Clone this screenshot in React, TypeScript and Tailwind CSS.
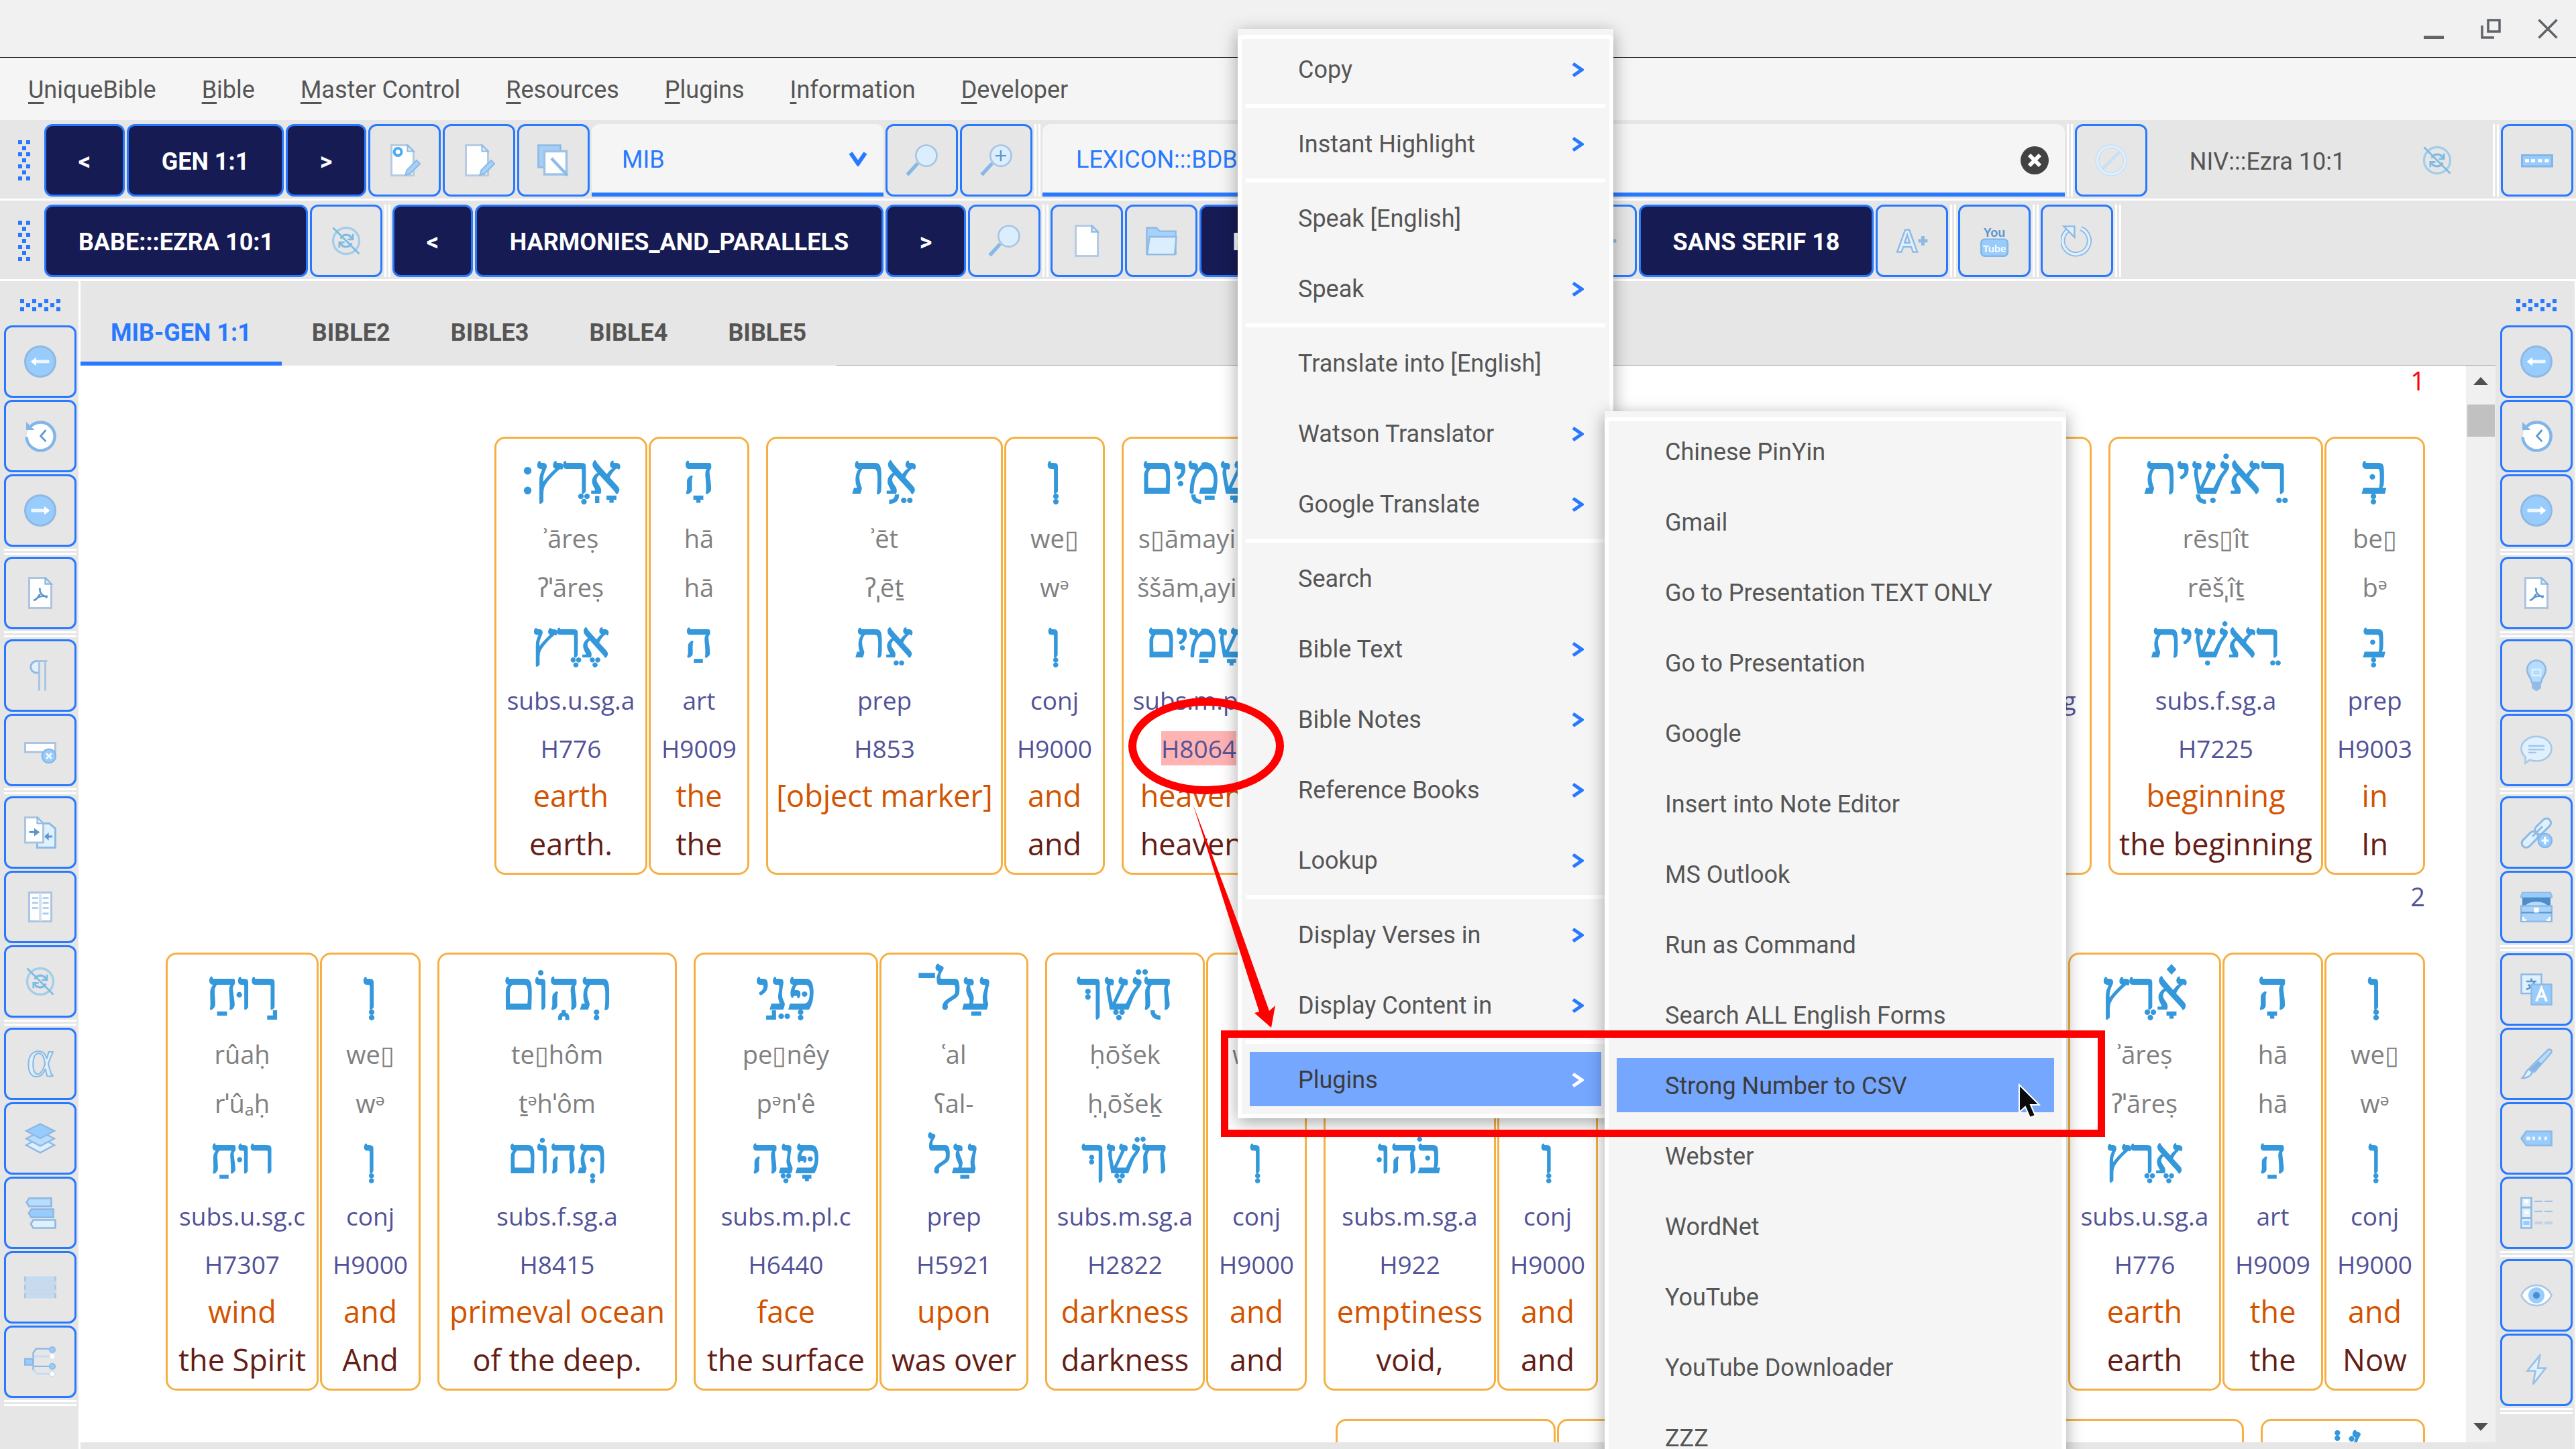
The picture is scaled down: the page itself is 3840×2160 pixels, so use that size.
import React from "react";

type P = { children?: React.ReactNode };

/* ---------- icons (16-unit grid) ---------- */
const Svg = ({ children }: P) => (
  <svg viewBox="0 0 16 16" className="size-12 shrink-0" fill="none" aria-hidden="true">
    {children}
  </svg>
);
const S = "#8fb9e3";
const D = "#5c96cf";
const F = "#98ccfd";
const L = "#dff0fe";

const Back = () => (
  <Svg>
    <circle cx="8" cy="8" r="7.5" fill={F} stroke={S} />
    <path d="M12.5 8H5" stroke="#eef7ff" strokeWidth="1.6" />
    <path d="M3.2 8 6 5.8v4.4z" fill="#fff" />
  </Svg>
);
const Forward = () => (
  <Svg>
    <circle cx="8" cy="8" r="7.5" fill={F} stroke={S} />
    <path d="M3.5 8H11" stroke="#eef7ff" strokeWidth="1.6" />
    <path d="M12.8 8 10 5.8v4.4z" fill="#fff" />
  </Svg>
);
const HistoryIcon = () => (
  <Svg>
    <circle cx="8.2" cy="8" r="6.9" fill="#fff" />
    <path d="M1.2 8.5a7 7 0 1 0 1.6-4.8" stroke="#83b6e8" strokeWidth="1.5" />
    <path d="M1 1v4h4.2z" fill="#83b6e8" />
    <path d="M10.8 5 8.2 8l2.6 2.7" stroke={D} strokeWidth="0.9" />
  </Svg>
);
const page = "M2.5.5h8l3 3v12h-11z";
const Fold = () => <path d="M10.5.5v3h3z" fill={L} stroke={S} strokeWidth="0.8" />;
const Pdf = () => (
  <Svg>
    <path d={page} fill="#fff" stroke="#a9c5e2" />
    <Fold />
    <path d="M7.8 5.5c-.2 2 .4 3.600 3.700 4.700M7.900 8.500c-.8 1.500-1.900 2.800-3.200 3.200M6.500 10.300c1.500-.7 3.500-1 5.200-.6" stroke={D} strokeWidth="0.9" />
  </Svg>
);
const Pilcrow = () => (
  <Svg>
    <path d="M7.500.8H6.200a2.900 2.900 0 0 0 0 5.900h1.300z" fill={L} stroke={S} />
    <path d="M6.500.8h5M7.500.5V15.500M10.500.5V15.500" stroke="#a9c5e2" strokeWidth="1" />
  </Svg>
);
const FieldRemove = () => (
  <Svg>
    <path d="M.5 4.500h15v4.500H.5z" fill="#fff" stroke="#a9c5e2" />
    <circle cx="12.300" cy="11" r="3.400" fill={F} stroke="#83b6e8" strokeWidth="0.7" />
    <path d="m11 9.700 2.600 2.600m0-2.600L11 12.300" stroke="#fff" strokeWidth="0.9" />
  </Svg>
);
const Docs = () => (
  <Svg>
    <path d="M6.500 3.500h6l3 2.500v9.500h-9z" fill={L} stroke={S} />
    <path d="M.5.5h6l3 3v9.500h-9z" fill="#fff" stroke="#a9c5e2" />
    <path d="M6.500.5v3h3z" fill={L} stroke={S} strokeWidth="0.7" />
    <path d="M2.500 7.800h3" stroke={D} />
    <path d="M5 5.800v4L7.800 7.800z" fill={D} />
    <path d="M11 10h3" stroke={D} />
    <path d="M12.200 8v4L10 10z" fill={D} />
  </Svg>
);
const Book = () => (
  <Svg>
    <path d="M2.500.8h11v14.400h-11z" fill="#fff" stroke="#a9c5e2" />
    <path d="M8 1v14" stroke="#d5e3f1" strokeWidth="1.4" />
    <path d="M4 3.500h3M4 6h3M4 8.500h3M9.200 3.500h3M9.200 6h3M9.200 8.500h3M9.200 11.300h3" stroke="#a9c8ea" strokeWidth="0.9" />
  </Svg>
);
const NoSync = () => (
  <Svg>
    <circle cx="8" cy="8" r="6.500" stroke="#a3cde8" strokeWidth="1.100" />
    <path d="M10.800 6.800A3 3 0 0 0 5.300 6.900M5.200 9.200a3 3 0 0 0 5.500-.1" stroke="#7dbbe3" strokeWidth="1.100" />
    <path d="M11.400 4.600v2.700H8.800M4.600 11.400V8.800h2.600" stroke="#7dbbe3" strokeWidth="0.9" />
    <path d="m1.500 1.500 13 13" stroke="#7dbbe3" strokeWidth="0.9" />
  </Svg>
);
const Alpha = () => (
  <Svg>
    <text x="8" y="14" textAnchor="middle" fontSize="26" fontFamily="Liberation Serif, serif" fill={L} stroke={S} strokeWidth="0.7">
      α
    </text>
  </Svg>
);
const Layers = () => (
  <Svg>
    <path d="m8 7.500 7 3.800-7 3.800-7-3.800z" fill={L} stroke={S} strokeWidth="0.8" />
    <path d="m8 4.500 7 3.600-7 3.700-7-3.700z" fill="#b6dcfe" stroke={S} strokeWidth="0.8" />
    <path d="m8 .8 7 3.500-7 3.700-7-3.700z" fill={F} stroke={S} strokeWidth="0.8" />
  </Svg>
);
const BooksStack = () => (
  <Svg>
    <path d="M13.500.7H2.500L1.200 2.800l1.300 2h11z" fill="#b6dcfe" stroke={S} strokeWidth="0.9" />
    <path d="M14.500 6.200h-11L2.300 8.200l1.200 2h11z" fill={F} stroke={S} strokeWidth="0.9" />
    <path d="M15.500 11.500h-11l-1.200 2 1.200 2h11z" fill={L} stroke={S} strokeWidth="0.9" />
  </Svg>
);
const Bars = () => (
  <Svg>
    <path d="M0 2.500h16v11H0z" fill="#cdd9e6" />
    <path d="M0 3.800h16M0 8h16M0 12.200h16" stroke="#a9c8e8" strokeWidth="2.200" />
    <path d="M1 3.800h14M1 8h14M1 12.200h14" stroke="#c3dcf4" strokeWidth="2.200" />
  </Svg>
);
const Tree = () => (
  <Svg>
    <path d="M4.500 8V3.500L6 1.500h7M5 10.300h8M4.500 8v4" stroke={S} strokeWidth="0.8" />
    <path d="M5 5.300h8M4.500 12l2 2h7" stroke="#c3dcf4" strokeWidth="0.9" />
    <path d="M.4 6.500h4v3h-4z" fill={F} stroke={S} strokeWidth="0.8" />
    <circle cx="14" cy="2" r="1.400" fill={F} stroke={S} strokeWidth="0.6" />
    <circle cx="14" cy="5.300" r="1.100" fill="#fff" />
    <circle cx="14" cy="10.300" r="1.400" fill={F} stroke={S} strokeWidth="0.6" />
    <circle cx="14" cy="14" r="1.300" fill="#fff" stroke="#c3dcf4" strokeWidth="0.4" />
  </Svg>
);
const Bulb = () => (
  <Svg>
    <path d="M8 .5a4.600 4.600 0 0 0-4.600 4.700C3.400 8 5.500 8.800 5.700 11.500h4.600c.2-2.700 2.300-3.500 2.300-6.300A4.600 4.600 0 0 0 8 .5z" fill="#b6dcfe" stroke={S} strokeWidth="0.9" />
    <path d="M6 5h4v3H6z" stroke={L} strokeWidth="0.8" />
    <path d="M5.700 11.500h4.600v2.800L8 15.800l-2.300-1.500z" fill="#92bbe5" />
  </Svg>
);
const Chat = () => (
  <Svg>
    <path d="M8 1.300c4.200 0 7.500 2.700 7.500 6s-3.300 6.200-7.500 6.200c-1.200 0-2.300-.2-3.300-.6L2.500 14.500v-3C1.200 10.400.5 9 .5 7.300c0-3.300 3.300-6 7.500-6z" fill={L} stroke="#a9c8e8" strokeWidth="0.9" />
    <path d="M4 6h8M4 7.800h8M4 9.300h4" stroke="#9fc5ec" strokeWidth="0.8" />
  </Svg>
);
const LinkAdd = () => (
  <Svg>
    <rect x="6.500" y="3" width="9.500" height="4.400" rx="2.200" transform="rotate(-45 11 5.200)" fill={L} stroke={S} strokeWidth="1" />
    <rect x="0" y="9.300" width="9.500" height="4.400" rx="2.200" transform="rotate(-45 4.700 11.500)" fill={L} stroke={S} strokeWidth="1" />
    <path d="m6 10 5-5" stroke={S} />
    <circle cx="12.300" cy="12" r="3.400" fill={F} stroke="#83b6e8" strokeWidth="0.7" />
    <path d="M10.500 12h3.600M12.300 10.200v3.600" stroke="#fff" />
  </Svg>
);
const Chest = () => (
  <Svg>
    <path d="M1 .8h14l1 2.500H0z" fill={F} stroke={S} strokeWidth="0.6" />
    <path d="M1 3.300h14V8H1z" fill="#4e8dcb" />
    <path d="M2 8c1.500-3.500 10.500-3.500 12 0z" fill="#b6dcfe" />
    <path d="M.4 7.500h15.200v7.700H.4z" fill="#a9d3fb" stroke={S} strokeWidth="0.8" />
    <path d="M.4 10.800h15.200" stroke={D} strokeWidth="0.7" />
    <path d="M6.800 8.300h2.400v2.500H6.800z" fill="#fff" />
    <path d="M1.500 13v1.500H3M14.500 13v1.500H13" stroke="#fff" strokeWidth="0.9" />
  </Svg>
);
const Translate = () => (
  <Svg>
    <path d="M.5.5h10V10H.5z" fill={L} stroke={S} strokeWidth="0.8" />
    <path d="M3 4h5M5.500 2.500V4M7 4c-.5 2-2 3.300-4 4M4 5.500c.8 1.200 2 2 3.700 2.300" stroke={D} strokeWidth="0.9" />
    <path d="M5.500 5.500h10v10h-10z" fill={F} stroke={S} strokeWidth="0.8" />
    <path d="m8 13.800 2.500-6.500 2.500 6.500M8.800 11.500h3.400" stroke="#fff" strokeWidth="1.200" />
  </Svg>
);
const Brush = () => (
  <Svg>
    <path d="M14 .8c1.200-.4 1.900.6 1.300 1.700L7 12l-2.300-2z" fill="#b6dcfe" stroke={S} strokeWidth="0.8" />
    <path d="m9 6.500-4.300 4L6.500 12l4-4.200z" fill="#83b6e8" />
    <path d="M4.300 10.500 6 12.300c-1 1.700-2.800 2.800-5 2.700 1.500-1.400 1.500-3.400 3.300-4.500z" fill={L} stroke={S} strokeWidth="0.8" />
  </Svg>
);
const Tag = () => (
  <Svg>
    <path d="M3 4.500h12.500v7H3L.5 8z" fill={F} stroke={S} strokeWidth="0.9" />
    <path d="M3 8h2M6 8h1.300M9 8h1.300M12 8h1.300" stroke="#e9f5ff" strokeWidth="1.600" />
  </Svg>
);
const Keyboard = () => (
  <Svg>
    <path d="M.5 5.500h15v5.500H.5z" fill={F} stroke="#83b6e8" strokeWidth="1" />
    <path d="M2 8.200h2M5 8.200h2M8.500 8.200h2M11.800 8.200h2" stroke="#fff" strokeWidth="1.600" />
  </Svg>
);
const ThumbList = () => (
  <Svg>
    <path d="M.5.5h5v15h-5z" fill={L} stroke={S} strokeWidth="0.9" />
    <path d="M.5 5.300h5M.5 10.500h5" stroke={S} />
    <path d="M1.500 13h3" stroke={F} strokeWidth="2" />
    <path d="M2.200 2.300h1.800M2.200 7.800h2" stroke="#fff" strokeWidth="1.800" />
    <path d="M7 2.300h4M12 2.300h4M7 7.300h4M12 7.300h4" stroke="#a0c2e4" strokeWidth="0.8" />
    <path d="M7 13h4M12 13h4" stroke="#c3d3e3" strokeWidth="1.500" />
  </Svg>
);
const Eye = () => (
  <Svg>
    <path d="M.5 8C3.500 1.300 12.500 1.300 15.500 8 12.500 14.700 3.500 14.700.5 8z" fill="#fff" stroke="#a9c8e8" strokeWidth="0.9" />
    <circle cx="8" cy="8" r="4" fill={F} />
    <circle cx="8" cy="8" r="1.700" fill="#4e8dcb" />
  </Svg>
);
const Bolt = () => (
  <Svg>
    <path d="M9.700.8 3.500 8.500h4l-1.200 6.700 6.200-8H8.700z" fill={L} stroke="#9dc0e4" strokeWidth="0.9" />
  </Svg>
);
const Search = () => (
  <Svg>
    <path d="M.8 15.200 6 9.500" stroke="#86b8e8" strokeWidth="1.800" />
    <circle cx="10.300" cy="5.700" r="5.200" fill="#dbeefe" stroke="#a9c5e2" strokeWidth="0.9" />
  </Svg>
);
const ZoomIn = () => (
  <Svg>
    <path d="M.8 15.200 6 9.500" stroke="#86b8e8" strokeWidth="1.800" />
    <circle cx="10.300" cy="5.700" r="5.200" fill="#dbeefe" stroke="#a9c5e2" strokeWidth="0.9" />
    <path d="M7.600 5.700H13M10.300 3v5.400" stroke={D} strokeWidth="0.8" />
  </Svg>
);
const File = () => (
  <Svg>
    <path d={page} fill="#fff" stroke="#b4cbe3" />
    <Fold />
  </Svg>
);
const Folder = () => (
  <Svg>
    <path d="M.8 14.500V1.500h4.800l1.700 1.700h7.900v11.300z" fill="#a5d2fc" stroke={S} strokeWidth="0.8" />
    <path d="M1 14.800 2.200 6h13.300l-.8 8.800z" fill="#dbeefe" stroke={S} strokeWidth="0.8" />
  </Svg>
);
const Pencil = () => (
  <path d="m8.500 15.300.6-2.400 4.900-4.900 1.700 1.700-4.900 4.900z" fill="#a5d2fc" stroke={S} strokeWidth="0.7" />
);
const DocEdit = () => (
  <Svg>
    <path d="M1.500.5h8l3 3v12h-11z" fill="#fff" stroke="#b4cbe3" />
    <path d="M9.500.5v3h3z" fill={L} stroke={S} strokeWidth="0.7" />
    <Pencil />
  </Svg>
);
const DocGear = () => (
  <Svg>
    <path d="M1.500.5h8l3 3v12h-11z" fill="#fff" stroke="#b4cbe3" />
    <path d="M9.500.5v3h3z" fill={L} stroke={S} strokeWidth="0.7" />
    <circle cx="4.700" cy="3.800" r="1.800" stroke="#4cacf0" strokeWidth="1.400" />
    <Pencil />
  </Svg>
);
const CopyEdit = () => (
  <Svg>
    <path d="M.5.5h11v11H.5z" fill="#a5cff7" stroke={S} strokeWidth="0.9" />
    <path d="M3.500 3.500h11v11.500h-11z" fill="#fff" stroke="#9fc3e8" strokeWidth="1.200" />
    <path d="m7 7 8 8.500" stroke="#8ebbe8" strokeWidth="1.500" />
  </Svg>
);
const Forbidden = () => (
  <Svg>
    <circle cx="8" cy="8" r="6.900" stroke="#c9dff4" strokeWidth="2" />
    <circle cx="8" cy="8" r="6.900" stroke={L} strokeWidth="1" />
    <path d="m3.500 12.500 9-9" stroke="#c9dff4" strokeWidth="1.500" />
  </Svg>
);
const glyphA = "m.7 13.500 4-11h2l4 11H8.500L7.700 11H3.700l-.8 2.500zM4.400 9h2.600L5.700 5z";
const FontUp = () => (
  <Svg>
    <path d={glyphA} fill={L} stroke={S} strokeWidth="0.8" />
    <path d="M11.200 8h4.600M13.500 5.700v4.600" stroke={S} strokeWidth="1.700" />
  </Svg>
);
const FontDown = () => (
  <Svg>
    <path d={glyphA} fill={L} stroke={S} strokeWidth="0.8" />
    <path d="M11.200 8h4.600" stroke={S} strokeWidth="1.700" />
  </Svg>
);
const YouTube = () => (
  <Svg>
    <text x="8" y="6" textAnchor="middle" fontSize="6" fontWeight="700" fontFamily="Liberation Sans Narrow, Liberation Sans, sans-serif" fill={D}>
      You
    </text>
    <rect x="1.400" y="7.200" width="13.200" height="8.400" rx="1.800" fill={F} stroke="#83b6e8" strokeWidth="0.8" />
    <text x="8" y="13.500" textAnchor="middle" fontSize="5" fontWeight="700" fontFamily="Liberation Sans Narrow, Liberation Sans, sans-serif" fill="#f4faff">
      Tube
    </text>
  </Svg>
);
const Refresh = () => (
  <Svg>
    <path d="M10 1.900a6.600 6.600 0 1 1-6.500.9" stroke={S} strokeWidth="2.400" />
    <path d="M10 1.900a6.600 6.600 0 1 1-6.500.9" stroke={L} strokeWidth="1.200" />
    <path d="M1.500.8h5.300v5.400z" fill={L} stroke={S} strokeWidth="0.8" />
  </Svg>
);

/* ---------- toolbar parts ---------- */
const IconButton = ({ icon, label }: { icon: React.ReactNode; label: string }) => (
  <button
    aria-label={label}
    className="flex size-[108px] shrink-0 items-center justify-center rounded-xl border-3 border-[#2979ff] bg-[#e6e6e6]"
  >
    {icon}
  </button>
);
const DarkButton = ({ w, children }: P & { w: string }) => (
  <button
    className={`flex h-[108px] shrink-0 items-center justify-center overflow-hidden rounded-xl border-3 border-[#2979ff] bg-[#161b54] pt-[3px] text-[36px] font-bold whitespace-nowrap text-white ${w}`}
  >
    {children}
  </button>
);
const VSep = () => <div className="h-[108px] w-[9px] shrink-0 border-x-3 border-white" />;
const HSep = () => <div className="h-[9px] w-full shrink-0 border-y-3 border-white" />;

const dots = [0, 1, 2, 3, 4, 5, 6];
const VGrip = () => (
  <svg viewBox="0 0 18 60" className="mr-[21px] ml-[27px] h-[60px] w-[18px] shrink-0" fill="#2979ff" aria-hidden="true">
    {dots.map((i) =>
      i % 2 ? (
        <rect key={i} x="6" y={i * 9} width="6" height="6" />
      ) : (
        <g key={i}>
          <rect x="0" y={i * 9} width="6" height="6" />
          <rect x="12" y={i * 9} width="6" height="6" />
        </g>
      )
    )}
  </svg>
);
const HGrip = () => (
  <svg viewBox="0 0 60 18" className="mt-[27px] mb-[18px] h-[18px] w-[60px] shrink-0" fill="#2979ff" aria-hidden="true">
    {dots.map((i) =>
      i % 2 ? (
        <rect key={i} x={i * 9} y="6" width="6" height="6" />
      ) : (
        <g key={i}>
          <rect x={i * 9} y="0" width="6" height="6" />
          <rect x={i * 9} y="12" width="6" height="6" />
        </g>
      )
    )}
  </svg>
);

/* ---------- interlinear data ---------- */
type Word = { w: string; t: string[]; mark?: boolean };
const W = (w: string, ...t: string[]): Word => ({ w, t });
const and = (last: string) => W("w-[150px]", "וְ", "we▯", "wᵊ", "וְ", "conj", "H9000", "and", last);
const the = W("w-[150px]", "הָ", "hā", "hā", "הַ", "art", "H9009", "the", "the");
const et = W("w-[353px]", "אֵ֥ת", "ʾēt", "ʔˌēṯ", "אֵת", "prep", "H853", "[object marker]", "");
const earth = (heb: string, last: string) =>
  W("w-[228px]", heb, "ʾāreṣ", "ʔˈāreṣ", "אֶרֶץ", "subs.u.sg.a", "H776", "earth", last);

const row1: Word[][] = [
  [
    W("w-[150px]", "בְּ", "be▯", "bᵊ", "בְּ", "prep", "H9003", "in", "In"),
    W("w-[320px]", "רֵאשִׁ֖ית", "rēs▯ît", "rēšˌîṯ", "רֵאשִׁית", "subs.f.sg.a", "H7225", "beginning", "the beginning"),
  ],
  [W("w-[400px]", "בָּרָ֣א", "bārāʾ", "bārˈā", "ברא", "verb.qal.perf.p3.u.sg", "H1254", "create", "created")],
  [W("w-[236px]", "אֱלֹהִ֑ים", "ʾĕlōhîm", "ʔᵉlōhˈîm", "אֱלֹהִים", "subs.m.pl.a", "H430", "god(s)", "God")],
  [et],
  [
    the,
    {
      w: "w-[230px]",
      t: ["שָּׁמַ֖יִם", "s▯āmayim", "ššāmˌayim", "שָׁמַיִם", "subs.m.pl.a", "H8064", "heavens", "heavens"],
      mark: true,
    },
  ],
  [and("and"), et],
  [the, earth("אָֽרֶץ:", "earth.")],
];
const row2: Word[][] = [
  [and("Now"), the, earth("אָ֗רֶץ", "earth")],
  [W("w-[313px]", "הָיְתָ֥ה", "hāytâ", "hāyᵊṯˌā", "היה", "verb.qal.perf", "H1961", "be", "was")],
  [W("w-[313px]", "תֹ֨הוּ֙", "tōhû", "ṯˈōhû", "תֹּהוּ", "subs.m.sg.a", "H8414", "emptiness", "formless")],
  [
    and("and"),
    W("w-[257px]", "בֹ֔הוּ", "bōhû", "vˈōhû", "בֹּהוּ", "subs.m.sg.a", "H922", "emptiness", "void,"),
  ],
  [
    and("and"),
    W("w-[238px]", "חֹ֖שֶׁךְ", "ḥōšek", "ḥˌōšeḵ", "חֹשֶׁךְ", "subs.m.sg.a", "H2822", "darkness", "darkness"),
  ],
  [
    W("w-[222px]", "עַל־", "ʿal", "ʕal-", "עַל", "prep", "H5921", "upon", "was over"),
    W("w-[275px]", "פְּנֵ֣י", "pe▯nêy", "pᵊnˈê", "פָּנֶה", "subs.m.pl.c", "H6440", "face", "the surface"),
  ],
  [W("w-[357px]", "תְה֑וֹם", "te▯hôm", "ṯᵊhˈôm", "תְּהוֹם", "subs.f.sg.a", "H8415", "primeval ocean", "of the deep.")],
  [
    and("And"),
    W("w-[228px]", "ר֣וּחַ", "rûaḥ", "rˈûₐḥ", "רוּחַ", "subs.u.sg.c", "H7307", "wind", "the Spirit"),
  ],
];
const row3: Word[][] = [
  [W("w-[245px]", "אֱלֹהִ֔ים", "ʾĕlōhîm", "ʔᵉlōhˈîm", "אֱלֹהִים", "subs.m.pl.a", "H430", "god(s)", "of God")],
  [W("w-[325px]", "מְרַחֶ֖פֶת", "me▯raḥepet", "mᵊraḥˌefeṯ", "רחף", "verb.piel.ptca", "H7363", "shake", "was hovering")],
  [
    W("w-[222px]", "עַל־", "ʿal", "ʕal-", "עַל", "prep", "H5921", "upon", "over"),
    W("w-[275px]", "פְּנֵ֥י", "pe▯nêy", "pᵊnˌê", "פָּנֶה", "subs.m.pl.c", "H6440", "face", "the surface"),
  ],
  [
    the,
    W("w-[328px]", "מָּֽיִם:", "māyim", "mmˈāyim", "מַיִם", "subs.m.pl.a", "H4325", "water", "of the waters."),
  ],
];

const lineClass = [
  "h-[109px] font-['Liberation_Serif',serif] text-[80px] leading-[102px] text-[#3498db] [-webkit-text-stroke:2px_#3498db]",
  "h-[73px] text-[38px] leading-[73px] text-[#808080]",
  "h-[73px] text-[38px] leading-[73px] text-[#808080]",
  "h-[95px] font-['Liberation_Serif',serif] text-[72px] leading-[86px] text-[#3498db] [-webkit-text-stroke:2px_#3498db]",
  "h-[73px] text-[37px] leading-[73px] text-[#525298]",
  "h-[72px] text-[37px] leading-[72px] text-[#525298]",
  "h-[72px] text-[45px] leading-[67px] text-[#d35400]",
  "h-[72px] text-[45px] leading-[68px] text-[#641e16]",
];

const WordBox = ({ word }: { word: Word }) => (
  <div className={`flex h-[653px] shrink-0 flex-col items-center rounded-2xl border-3 border-[#f5b041] pt-[3px] whitespace-nowrap ${word.w}`}>
    {word.t.map((t, i) => (
      <div key={i} dir={i === 0 || i === 3 ? "rtl" : "ltr"} className={lineClass[i]}>
        {word.mark && i === 5 ? <mark className="bg-[#ffb3b3] text-[#525298]">{t}</mark> : t}
      </div>
    ))}
  </div>
);
const Row = ({ groups }: { groups: Word[][] }) => (
  <div dir="rtl" className="flex gap-[25px]">
    {groups.map((g, i) => (
      <div key={i} className="flex gap-0.5">
        {g.map((w, j) => (
          <WordBox key={j} word={w} />
        ))}
      </div>
    ))}
  </div>
);

/* ---------- menus ---------- */
const Chevron = ({ className }: { className: string }) => (
  <svg viewBox="0 0 18 22" className={`h-[22px] w-[18px] ${className}`} fill="none" aria-hidden="true">
    <path d="m2 2 13 9-13 9" stroke="currentColor" strokeWidth="5" />
  </svg>
);
const MenuPanel = ({ children, place }: P & { place: string }) => (
  <div className={`absolute bg-[#f5f5f5] pt-[9px] text-[36px] shadow-[0_6px_24px_rgba(0,0,0,0.35)] ${place}`}>
    <div className="rounded-t-md border-6 border-white">
      <div className="-mt-2">{children}</div>
    </div>
  </div>
);
const Item = ({ label, sub, active, pad }: { label: string; sub?: boolean; active?: boolean; pad: string }) => (
  <button
    role="menuitem"
    className={`mx-3 my-3 flex h-[81px] w-[calc(100%-24px)] items-center justify-between pt-0.5 pr-[26px] text-left whitespace-nowrap ${pad} ${
      active ? "bg-[#75a7ff] text-[#3c3c3c]" : "text-[#555555]"
    }`}
  >
    {label}
    {sub && <Chevron className={active ? "text-white" : "text-[#2979ff]"} />}
  </button>
);
const menu: [string, boolean][][] = [
  [["Copy", true]],
  [["Instant Highlight", true]],
  [["Speak [English]", false], ["Speak", true]],
  [["Translate into [English]", false], ["Watson Translator", true], ["Google Translate", true]],
  [["Search", false], ["Bible Text", true], ["Bible Notes", true], ["Reference Books", true], ["Lookup", true]],
  [["Display Verses in", true], ["Display Content in", true]],
  [["Plugins", true]],
];
const plugins = [
  "Chinese PinYin", "Gmail", "Go to Presentation TEXT ONLY", "Go to Presentation", "Google",
  "Insert into Note Editor", "MS Outlook", "Run as Command", "Search ALL English Forms",
  "Strong Number to CSV", "Webster", "WordNet", "YouTube", "YouTube Downloader", "ZZZ",
];

const menubar = ["UniqueBible", "Bible", "Master Control", "Resources", "Plugins", "Information", "Developer"];
const tabs = ["MIB-GEN 1:1", "BIBLE2", "BIBLE3", "BIBLE4", "BIBLE5"];

export default function App() {
  return (
    <div className="relative flex h-screen flex-col overflow-hidden bg-[#e6e6e6] font-[Roboto,sans-serif] text-[#555555]">
      <header className="flex h-[86px] shrink-0 items-center justify-end border-b border-black bg-[#f1f1f1] pr-[27px]">
        <div className="flex gap-[55px] text-[#5f6368]">
          <button aria-label="Minimize">
            <svg viewBox="0 0 30 30" className="size-[30px]" aria-hidden="true"><path d="M0 25.500h30v4.500H0z" fill="currentColor" /></svg>
          </button>
          <button aria-label="Restore">
            <svg viewBox="0 0 30 30" className="size-[30px]" fill="none" stroke="currentColor" strokeWidth="3.500" aria-hidden="true">
              <path d="M11 2h17v17H11z" />
              <path d="M2 10v18h18" />
            </svg>
          </button>
          <button aria-label="Close">
            <svg viewBox="0 0 30 30" className="size-[30px]" fill="none" stroke="currentColor" strokeWidth="3.500" aria-hidden="true">
              <path d="m1.500 1.500 27 27m0-27-27 27" />
            </svg>
          </button>
        </div>
      </header>

      <nav className="flex h-[93px] shrink-0 items-center bg-[#f5f5f5] pt-0.5 pl-2 text-[36px]">
        {menubar.map((m) => (
          <button key={m} className="px-[34px]">
            <span className="underline decoration-3 underline-offset-6">{m[0]}</span>
            {m.slice(1)}
          </button>
        ))}
      </nav>

      <div className="flex h-[120px] shrink-0 items-center border-b-3 border-white pt-[3px] pr-1">
        <VGrip />
        <div className="flex min-w-0 flex-1 items-center gap-[3px]">
          <DarkButton w="w-[120px]">&lt;</DarkButton>
          <DarkButton w="w-[234px]">GEN 1:1</DarkButton>
          <DarkButton w="w-[120px]">&gt;</DarkButton>
          <IconButton icon={<DocGear />} label="Edit settings" />
          <IconButton icon={<DocEdit />} label="Edit note" />
          <IconButton icon={<CopyEdit />} label="Edit copy" />
          <div className="relative h-[108px] w-[435px] shrink-0">
            <select
              aria-label="Version"
              className="h-full w-full appearance-none rounded-t-xl border-b-6 border-[#2979ff] bg-[#f5f5f5] pt-[3px] pl-[45px] text-[36px] text-[#2979ff]"
            >
              <option>MIB</option>
            </select>
            <svg viewBox="0 0 28 22" className="pointer-events-none absolute top-[41px] right-6 h-[22px] w-7" fill="none" aria-hidden="true">
              <path d="m3 2 11 16L25 2" stroke="#2979ff" strokeWidth="6" />
            </svg>
          </div>
          <IconButton icon={<Search />} label="Search" />
          <IconButton icon={<ZoomIn />} label="Zoom in" />
          <VSep />
          <div className="relative h-[108px] min-w-0 flex-1">
            <input
              aria-label="Command"
              defaultValue="LEXICON:::BDB:::H7225"
              className="h-full w-full rounded-t-xl border-b-6 border-[#2979ff] bg-[#f5f5f5] pt-[3px] pl-[50px] text-[36px] text-[#2979ff]"
            />
            <button aria-label="Clear" className="absolute top-[33px] right-6">
              <svg viewBox="0 0 42 42" className="size-[42px]" aria-hidden="true">
                <circle cx="21" cy="21" r="21" fill="#424242" />
                <path d="m13 13 16 16m0-16L13 29" stroke="#fff" strokeWidth="6" />
              </svg>
            </button>
          </div>
          <VSep />
          <IconButton icon={<Forbidden />} label="Disable" />
          <button className="h-[108px] w-[346px] shrink-0 pt-[3px] pl-1.5 text-[36px]">NIV:::Ezra 10:1</button>
          <button aria-label="Sync off" className="flex h-[108px] w-[160px] shrink-0 items-center justify-center">
            <NoSync />
          </button>
          <VSep />
          <IconButton icon={<Keyboard />} label="Keyboard" />
        </div>
      </div>

      <div className="flex h-[120px] shrink-0 items-center border-b-3 border-white pt-[3px]">
        <VGrip />
        <div className="flex items-center gap-[3px]">
          <DarkButton w="w-[393px]">BABE:::EZRA 10:1</DarkButton>
          <IconButton icon={<NoSync />} label="Sync off" />
          <VSep />
          <DarkButton w="w-[120px]">&lt;</DarkButton>
          <DarkButton w="w-[609px]">HARMONIES_AND_PARALLELS</DarkButton>
          <DarkButton w="w-[120px]">&gt;</DarkButton>
          <IconButton icon={<Search />} label="Search" />
          <VSep />
          <IconButton icon={<File />} label="New file" />
          <IconButton icon={<Folder />} label="Open folder" />
          <DarkButton w="w-[430px]">FILE 1 - NEW NOTES</DarkButton>
          <IconButton icon={<DocEdit />} label="Edit" />
          <IconButton icon={<FontDown />} label="Smaller font" />
          <DarkButton w="w-[350px]">SANS SERIF 18</DarkButton>
          <IconButton icon={<FontUp />} label="Larger font" />
          <VSep />
          <IconButton icon={<YouTube />} label="YouTube" />
          <VSep />
          <IconButton icon={<Refresh />} label="Reload" />
          <VSep />
        </div>
      </div>

      <div className="flex min-h-0 flex-1">
        <aside className="flex w-[120px] shrink-0 flex-col items-center gap-[3px] border-r-3 border-white pr-[3px] pl-[6px]">
          <HGrip />
          <IconButton icon={<Back />} label="Back" />
          <IconButton icon={<HistoryIcon />} label="History" />
          <IconButton icon={<Forward />} label="Forward" />
          <HSep />
          <IconButton icon={<Pdf />} label="PDF" />
          <HSep />
          <IconButton icon={<Pilcrow />} label="Paragraphs" />
          <IconButton icon={<FieldRemove />} label="Subheadings" />
          <HSep />
          <IconButton icon={<Docs />} label="Compare" />
          <IconButton icon={<Book />} label="Parallel" />
          <IconButton icon={<NoSync />} label="Sync off" />
          <HSep />
          <IconButton icon={<Alpha />} label="Original" />
          <IconButton icon={<Layers />} label="Layers" />
          <IconButton icon={<BooksStack />} label="Interlinear" />
          <IconButton icon={<Bars />} label="Lines" />
          <IconButton icon={<Tree />} label="Tree" />
          <HSep />
        </aside>

        <main className="flex min-w-0 flex-1 flex-col">
          <div className="flex h-[126px] shrink-0 text-[36px] font-bold" role="tablist">
            {tabs.map((t, i) => (
              <button
                key={t}
                role="tab"
                aria-selected={i === 0}
                className={`border-b-6 px-[45px] pt-[33px] pb-0 whitespace-nowrap ${i === 0 ? "border-[#2979ff] text-[#2979ff]" : "border-transparent"}`}
              >
                {t}
              </button>
            ))}
            <div className="flex-1 border-b border-[#aaaaaa]" />
          </div>
          <div className="mb-[10px] flex min-h-0 flex-1">
            <div className="min-w-0 flex-1 overflow-hidden bg-white pr-[61px] font-['Open_Sans','Noto_Sans',sans-serif]">
              <div className="h-[106px] text-right text-[38px] leading-[44px] text-[#ff0000]">1</div>
              <Row groups={row1} />
              <div className="h-[116px] text-right text-[38px] leading-[64px] text-[#525298]">2</div>
              <Row groups={row2} />
              <div className="h-[42px]" />
              <Row groups={row3} />
            </div>
            <div className="flex w-11 shrink-0 flex-col items-center bg-[#f0f0f0]">
              <svg viewBox="0 0 22 12" className="mt-[17px] h-3 w-[22px]" aria-hidden="true"><path d="M11 0 22 12H0z" fill="#505050" /></svg>
              <div className="mt-[29px] h-12 w-[41px] bg-[#c1c1c1]" />
              <svg viewBox="0 0 22 12" className="mt-auto mb-[17px] h-3 w-[22px]" aria-hidden="true"><path d="M11 12 22 0H0z" fill="#505050" /></svg>
            </div>
          </div>
        </main>

        <aside className="flex w-[120px] shrink-0 flex-col items-center gap-[3px] border-r-2 border-white pr-[3px] pl-[7px]">
          <HGrip />
          <IconButton icon={<Back />} label="Back" />
          <IconButton icon={<HistoryIcon />} label="History" />
          <IconButton icon={<Forward />} label="Forward" />
          <HSep />
          <IconButton icon={<Pdf />} label="PDF" />
          <HSep />
          <IconButton icon={<Bulb />} label="Instant" />
          <IconButton icon={<Chat />} label="Commentary" />
          <HSep />
          <IconButton icon={<LinkAdd />} label="Cross references" />
          <IconButton icon={<Chest />} label="Treasury" />
          <HSep />
          <IconButton icon={<Translate />} label="Translations" />
          <IconButton icon={<Brush />} label="Discourse" />
          <IconButton icon={<Tag />} label="Words" />
          <IconButton icon={<ThumbList />} label="Combo" />
          <HSep />
          <IconButton icon={<Eye />} label="Quick view" />
          <IconButton icon={<Bolt />} label="Instant mode" />
          <HSep />
        </aside>
      </div>

      <MenuPanel place="left-[1845px] top-[43px] w-[560px]">
        {menu.map((g, i) => (
          <React.Fragment key={i}>
            {i > 0 && <div className="mx-1.5 h-1.5 bg-white" />}
            <div className="flow-root">
              {g.map(([label, sub]) => (
                <div key={label} className="flow-root">
                  <Item label={label} sub={sub} active={label === "Plugins"} pad="pl-[72px]" />
                </div>
              ))}
            </div>
          </React.Fragment>
        ))}
      </MenuPanel>
      <MenuPanel place="left-[2392px] top-[613px] w-[688px]">
        {plugins.map((label) => (
          <div key={label} className="flow-root">
            <Item label={label} active={label === "Strong Number to CSV"} pad="pl-[72px]" />
          </div>
        ))}
      </MenuPanel>

      <div className="pointer-events-none absolute top-[1040px] left-[1682px] h-[144px] w-[232px] rounded-[50%] border-12 border-[#ff0000]" />
      <svg viewBox="0 0 132 340" className="pointer-events-none absolute top-[1196px] left-[1775px] h-[340px] w-[132px]" aria-hidden="true">
        <path d="M3 2 72 184l45 127 9-8-6 33-25-22 7-2-41-128z" fill="#ff0000" />
      </svg>
      <div className="pointer-events-none absolute top-[1536px] left-[1820px] h-[159px] w-[1318px] border-11 border-[#ff0000]" />
      <svg viewBox="0 0 36 54" className="pointer-events-none absolute top-[1614px] left-[3008px] h-[54px] w-9" aria-hidden="true">
        <path d="M2 3v41l9-8 7 16 8-3-7-16h13z" fill="#0a0a0a" stroke="#fff" strokeWidth="2" />
      </svg>
    </div>
  );
}
